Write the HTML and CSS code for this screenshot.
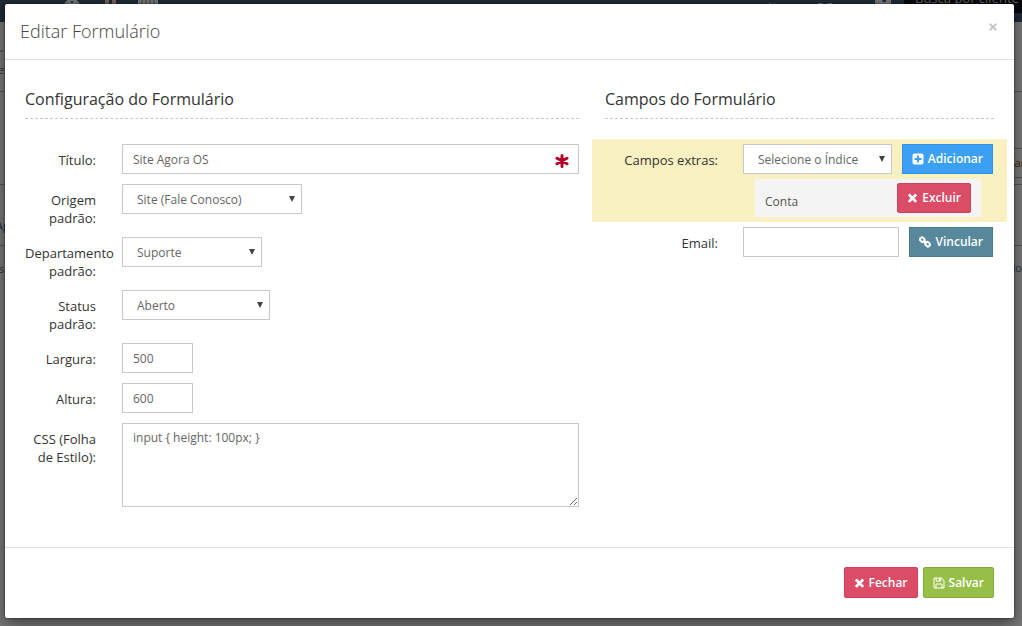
FILE: index.html
```
<!DOCTYPE html>
<html lang="pt-BR">
<head>
<meta charset="utf-8">
<title>Editar Formulário</title>
<link rel="stylesheet" href="styles.css">
</head>
<body>
<div class="backdrop" aria-hidden="true">
  <div class="topbar">
    <svg class="nav-icon nav-clock" viewBox="0 0 20 20"><circle cx="10" cy="8" r="9"/><path class="hole" d="M9 1h2v2H9z"/></svg>
    <svg class="nav-icon nav-pair" viewBox="0 0 12 6"><path class="tan" d="M0 0h4v6H0zM7 0h4v6H7z"/></svg>
    <svg class="nav-icon nav-grid" viewBox="0 0 20 6"><path d="M0 0h20v6H0z"/><path class="bars" d="M4 0v4M8 0v4M12 0v4M16 0v4"/></svg>
    <svg class="nav-icon nav-marks" viewBox="0 0 66 6"><path d="M1 3h2v2H1zM6 3h1v2H6zM50 3h5v1h-5zM59 3h5v1h-5z"/></svg>
    <svg class="nav-icon nav-help" viewBox="0 0 16 6"><path d="M0 0h16v6H0z"/><path class="hole" d="M7 0h4v2H8z"/></svg>
    <div class="search"><span class="search-text">Busca por cliente</span></div>
  </div>
  <span class="peek peek-er">er</span>
  <span class="peek peek-dot">.</span>
  <span class="peek peek-ag">Ag</span>
  <span class="peek peek-s">s</span>
  <span class="peek peek-ar">ar</span>
  <span class="peek peek-io">io</span>
  <span class="rule rule-a"></span><span class="rule rule-b"></span><span class="rule rule-c"></span><span class="rule rule-d"></span><span class="rule rule-e"></span>
</div>

<form class="modal" role="dialog" aria-labelledby="dialog-title">
  <header class="modal-header">
    <h1 class="modal-title" id="dialog-title">Editar Formulário</h1>
    <button class="close" type="button" aria-label="Fechar janela"><svg viewBox="0 0 8 8"><path d="M0.7 0.7l6.6 6.6M7.3 0.7L0.7 7.3"/></svg></button>
  </header>

  <div class="modal-body">
    <section class="config">
      <h2 class="section-title">Configuração do Formulário</h2>
      <div class="row">
        <label class="label" for="titulo">Título:</label>
        <div class="control required">
          <input class="input" id="titulo" type="text" value="Site Agora OS" required>
          <svg class="asterisk" viewBox="0 0 14 14"><path d="M7 1.5v11M2 4.2l10 5.6M12 4.2L2 9.8"/></svg>
        </div>
      </div>
      <div class="row">
        <label class="label" for="origem">Origem padrão:</label>
        <div class="control select-box w-origem"><select class="input" id="origem"><option>Site (Fale Conosco)</option></select></div>
      </div>
      <div class="row">
        <label class="label" for="departamento">Departamento padrão:</label>
        <div class="control select-box w-depto"><select class="input" id="departamento"><option>Suporte</option></select></div>
      </div>
      <div class="row">
        <label class="label" for="status">Status padrão:</label>
        <div class="control select-box w-status"><select class="input" id="status"><option>Aberto</option></select></div>
      </div>
      <div class="row">
        <label class="label" for="largura">Largura:</label>
        <div class="control"><input class="input short" id="largura" type="text" value="500"></div>
      </div>
      <div class="row">
        <label class="label" for="altura">Altura:</label>
        <div class="control"><input class="input short" id="altura" type="text" value="600"></div>
      </div>
      <div class="row">
        <label class="label" for="css">CSS (Folha de Estilo):</label>
        <div class="control"><textarea class="input area" id="css">input { height: 100px; }</textarea></div>
      </div>
    </section>

    <section class="fields">
      <h2 class="section-title">Campos do Formulário</h2>
      <div class="extras">
        <div class="row wide">
          <label class="label" for="extras">Campos extras:</label>
          <div class="control inline">
            <div class="select-box grow"><select class="input" id="extras"><option>Selecione o Índice</option></select></div>
            <button class="btn blue" type="button"><svg class="icon" viewBox="0 0 12 12"><path fill-rule="evenodd" d="M2.5 0.5h7a2 2 0 0 1 2 2v7a2 2 0 0 1-2 2h-7a2 2 0 0 1-2-2v-7a2 2 0 0 1 2-2zM5 2.5V5H2.5v2H5v2.5h2V7h2.5V5H7V2.5z"/></svg>Adicionar</button>
          </div>
        </div>
        <div class="extra-item">
          <span class="extra-name">Conta</span>
          <button class="btn red" type="button"><svg class="icon cross" viewBox="0 0 12 12"><path d="M2 2.2l8 8M10 2.2l-8 8"/></svg>Excluir</button>
        </div>
      </div>
      <div class="row wide">
        <label class="label" for="email">Email:</label>
        <div class="control inline">
          <input class="input grow" id="email" type="text">
          <button class="btn teal" type="button"><svg class="icon link" viewBox="0 0 12 12"><rect x="1" y="1.6" width="4.6" height="3.8" rx="1.6" transform="rotate(45 3.1 3.6)"/><rect x="6.2" y="6.4" width="4.6" height="3.8" rx="1.6" transform="rotate(45 8.7 8.4)"/><path d="M4.4 4.6l3 3"/></svg>Vincular</button>
        </div>
      </div>
    </section>
  </div>

  <footer class="modal-footer">
    <button class="btn red" type="button"><svg class="icon cross" viewBox="0 0 12 12"><path d="M2 2.2l8 8M10 2.2l-8 8"/></svg>Fechar</button>
    <button class="btn green" type="submit"><svg class="icon save" viewBox="0 0 12 12"><path d="M1 1h7.6L11 3.4V11H1zM3.2 1v3.2h4.6V1M3 11V7h6v4"/><path class="solid" d="M5.8 1h2v3h-2z"/></svg>Salvar</button>
  </footer>
</form>
</body>
</html>
```
FILE: styles.css
```
* { box-sizing: border-box; }

body {
  margin: 0;
  padding: 4px 8px 8px 5px;
  background: #787878;
  color: #333;
  font: 13px/18px "Open Sans", "Noto Sans", sans-serif;
}

/* dimmed page behind the dialog */
.backdrop { position: absolute; inset: 0; overflow: hidden; background: #787878; }
.topbar { height: 22px; background: #1f2a36; }
.nav-icon { position: absolute; top: 0; fill: #777; }
.nav-clock { left: 62px; width: 20px; height: 20px; }
.nav-pair { left: 105px; width: 12px; height: 6px; }
.nav-grid { left: 138px; width: 20px; height: 6px; }
.nav-marks { left: 768px; width: 66px; height: 6px; }
.nav-help { left: 875px; width: 16px; height: 6px; }
.nav-icon .hole { fill: #1f2a36; }
.nav-icon .tan { fill: #75625a; }
.nav-icon .bars { stroke: #3b3f45; }
.search { position: absolute; top: 0; right: 0; width: 118px; height: 13px; background: #07090c; }
.search-text { position: absolute; left: 11px; top: -11px; font-size: 13px; color: #626262; white-space: nowrap; }
.peek { position: absolute; font-size: 11px; line-height: 14px; color: #333; }
.peek-dot { left: 0; top: 41px; font-weight: 700; }
.peek-er { left: -2px; top: 63px; }
.peek-ag { left: -4px; top: 219px; color: #14293d; }
.peek-s { left: -1px; top: 262px; }
.peek-ar { right: -3px; top: 156px; color: #38220f; }
.peek-io { right: 0; top: 261px; }
.rule { position: absolute; left: 0; right: 0; height: 1px; background: #555; }
.rule-a { top: 91px; }
.rule-b { top: 184px; }
.rule-c { top: 245px; }
.rule-d { top: 148px; left: 50%; }
.rule-e { top: 177px; left: 50%; }

.modal {
  position: relative;
  background: #fff;
  border-radius: 2px;
  box-shadow: 0 5px 15px rgba(0, 0, 0, 0.5), 0 0 2px rgba(0, 0, 0, 0.7);
}

.modal-header {
  display: flex;
  align-items: flex-start;
  justify-content: space-between;
  padding: 15px 15px 15px;
  border-bottom: 1px solid #e0e0e0;
}
.modal-title { margin: 0; font-size: 18px; line-height: 25px; font-weight: 300; color: #444; }
.close { display: flex; margin: 4px 2px; padding: 0; border: 0; background: none; }
.close svg { width: 8px; height: 8px; fill: none; stroke: #c8c8c8; stroke-width: 2; }

.modal-body {
  display: grid;
  grid-template-columns: minmax(0, 554fr) minmax(0, 389fr);
  gap: 26px;
  padding: 28px 20px 40px;
}
.section-title {
  margin: 0 0 25px;
  padding-bottom: 8px;
  border-bottom: 1px dashed #c8c8c8;
  font-size: 16px;
  line-height: 22px;
  font-weight: 400;
}

.row { display: flex; gap: 26px; margin-bottom: 10px; }
.row:last-child { margin-bottom: 0; }
.label { flex: none; width: 71px; padding-top: 7px; text-align: right; }
.wide { gap: 25px; }
.wide .label { width: 113px; }
.control { flex: 1; min-width: 0; }
.inline { display: flex; gap: 10px; }
.grow { flex: 1; min-width: 0; }

.input {
  display: block;
  width: 100%;
  height: 30px;
  padding: 0 10px;
  border: 1px solid #c8c8c8;
  border-radius: 0;
  background: #fff;
  color: #666;
  font: 12px/18px "Open Sans", "Noto Sans", sans-serif;
}
.short { width: 71px; }
.area { height: 84px; padding-top: 5px; resize: both; }
.grow.input { width: auto; }

.required, .select-box { position: relative; }
.asterisk {
  position: absolute;
  top: 10px;
  right: 10px;
  width: 14px;
  height: 14px;
  fill: none;
  stroke: #b00029;
  stroke-width: 3;
  stroke-linecap: round;
}
.select-box select { appearance: none; padding: 2px 14px 0; }
.select-box::after {
  content: "";
  position: absolute;
  top: 12px;
  right: 7px;
  border: solid transparent;
  border-width: 6px 3px 0;
  border-top-color: #444;
  pointer-events: none;
}
.w-origem { flex: 0 0 180px; }
.w-depto { flex: 0 0 140px; }
.w-status { flex: 0 0 148px; }

.extras { margin: -5px -13px 5px; padding: 5px 14px 5px 13px; background: #f9f1c1; }
.extras .row { margin-bottom: 5px; }
.extra-item {
  display: flex;
  justify-content: space-between;
  margin: 0 12px 0 150px;
  padding: 4px 10px;
  background: #f4f4f4;
}
.extra-name { padding-top: 10px; font-size: 12px; color: #555; }
.fields > .row { padding-right: 1px; }

.btn {
  display: flex;
  align-items: center;
  gap: 4px;
  height: 30px;
  padding: 0 9px;
  border: 1px solid;
  border-radius: 2px;
  color: #fff;
  font: 600 12px/18px "Open Sans", "Noto Sans", sans-serif;
}
.blue { background: #3b9ff3; border-color: #2f92e6; border-radius: 0; }
.red { background: #db4c67; border-color: #cf405c; }
.teal { background: #57889c; border-color: #4c7b8e; border-radius: 0; }
.green { background: #96bf48; border-color: #85ac38; }
.icon { width: 12px; height: 12px; fill: #fff; }
.icon.cross { width: 11px; fill: none; stroke: #fff; stroke-width: 3; }
.link { fill: none; stroke: #fff; stroke-width: 2; }
.save { fill: none; stroke: #fff; stroke-width: 1; }
.save .solid { fill: #fff; stroke: none; }

.modal-footer {
  display: flex;
  justify-content: flex-end;
  gap: 5px;
  padding: 19px 20px 20px;
  border-top: 1px solid #e0e0e0;
}
.modal-footer .btn { height: 31px; }
```
